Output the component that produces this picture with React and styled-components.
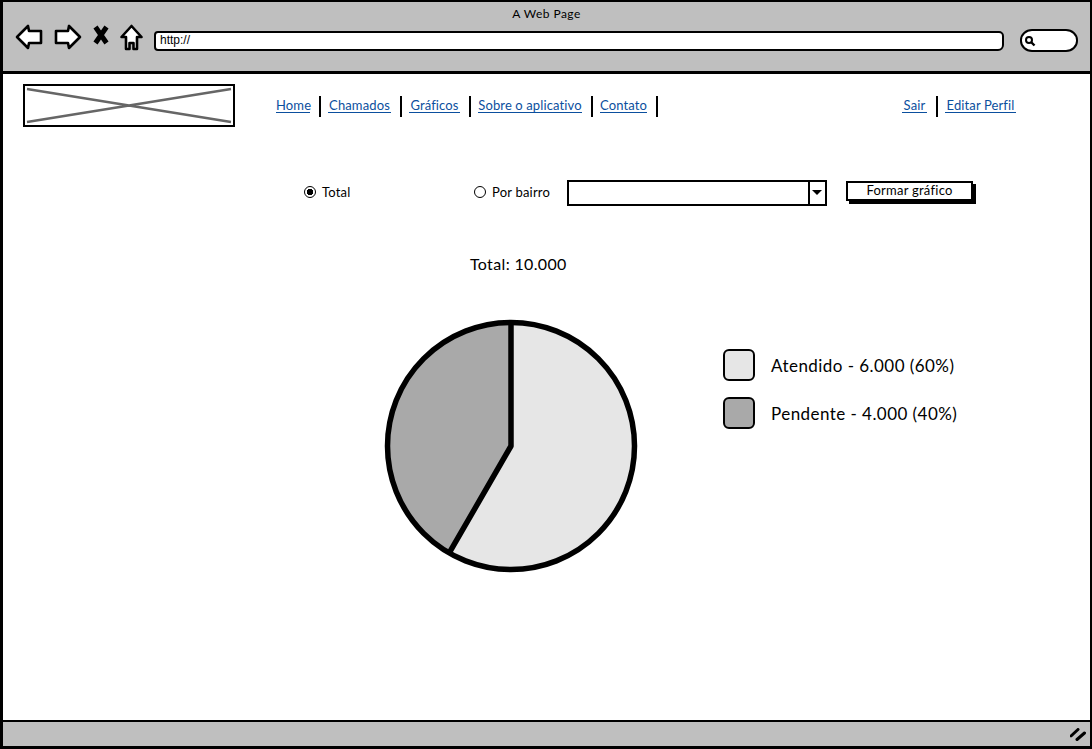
import styled, { createGlobalStyle } from "styled-components"

const topLinks = [
    { label: "Home", width: 34 },
    { label: "Chamados", width: 63 },
    { label: "Gráficos", width: 51 },
    { label: "Sobre o aplicativo", width: 104 },
    { label: "Contato", width: 47 },
]
const userLinks = [
    { label: "Sair", width: 25 },
    { label: "Editar Perfil", width: 71 },
]

const legend = [
    { label: "Atendido - 6.000 (60%)", color: "#e6e6e6" },
    { label: "Pendente - 4.000 (40%)", color: "#a9a9a9" },
]

const GlobalStyle = createGlobalStyle`
    html, body {
        margin: 0;
        padding: 0;
        background: #fff;
    }
    body {
        font-family: "Lato", "Liberation Sans", sans-serif;
        color: #000;
    }
`

const BackIcon = () => (
    <ToolIcon width="28" height="26" viewBox="0 0 28 26">
        <path d="M2 13 L13 2 L14 7 L26 7 L26 19 L14 19 L13 24 Z" fill="#fff" stroke="#000" strokeWidth="2.6" strokeLinejoin="round" />
    </ToolIcon>
)

const ForwardIcon = () => (
    <ToolIcon width="28" height="26" viewBox="0 0 28 26">
        <path d="M26 13 L15 2 L14 7 L2 7 L2 19 L14 19 L15 24 Z" fill="#fff" stroke="#000" strokeWidth="2.6" strokeLinejoin="round" />
    </ToolIcon>
)

const StopIcon = () => (
    <ToolIcon $top={1} width="16" height="20" viewBox="0 0 16 20">
        <path d="M2.5 2 L13.5 18 M13.5 2 L2.5 18" fill="none" stroke="#000" strokeWidth="5" />
    </ToolIcon>
)

const HomeIcon = () => (
    <ToolIcon width="23" height="27" viewBox="0 0 23 27">
        <path d="M11.5 2 L21.5 13 L17 13 L17 25 L13.5 25 L13.5 19 L9.5 19 L9.5 25 L6 25 L6 13 L1.5 13 Z" fill="#fff" stroke="#000" strokeWidth="2.6" strokeLinejoin="round" />
    </ToolIcon>
)

const SearchGlyph = () => (
    <svg width="12" height="12" viewBox="0 0 12 12">
        <circle cx="5" cy="5" r="3" fill="none" stroke="#000" strokeWidth="2" />
        <path d="M7.5 7.5 L10.5 10.5" stroke="#000" strokeWidth="2.4" />
    </svg>
)

const ResizeGrip = () => (
    <svg width="16" height="13" viewBox="0 0 16 13">
        <path d="M1 8 L8 1.5 M7 11.5 L14.5 5" stroke="#000" strokeWidth="3" strokeLinecap="round" />
    </svg>
)

const LogoCross = () => (
    <LogoLines viewBox="0 0 208 39" preserveAspectRatio="none">
        <path d="M2 3 L206 36 M206 3 L2 36" stroke="#666" strokeWidth="2.4" fill="none" />
    </LogoLines>
)

const PieChart = () => (
    <svg width="254" height="254" viewBox="0 0 254 254">
        <circle cx="127" cy="127" r="123.5" fill="#e6e6e6" />
        <path d="M127 127 L65.25 233.95 A123.5 123.5 0 0 1 127 3.5 Z" fill="#a9a9a9" />
        <circle cx="127" cy="127" r="123.5" fill="none" stroke="#000" strokeWidth="5.5" />
        <path d="M127 3.5 L127 127 L65.25 233.95" fill="none" stroke="#000" strokeWidth="5.5" strokeLinejoin="round" />
    </svg>
)

const App = () => {
    const renderLinks = (links) => {
        return links.map(l => (
            <NavItem key={l.label}>
                <NavLink href="#" $width={l.width}>{l.label}</NavLink>
            </NavItem>
        ))
    }

    return (
        <Window>
            <GlobalStyle />
            <TitleBar>
                <PageTitle>A Web Page</PageTitle>
                <BrowserRow>
                    <BackIcon />
                    <ForwardIcon />
                    <StopIcon />
                    <HomeIcon />
                    <UrlField>http://</UrlField>
                    <SearchField><SearchGlyph /></SearchField>
                </BrowserRow>
            </TitleBar>

            <Content>
                <Header>
                    <Logo><LogoCross /></Logo>
                    <Nav>{renderLinks(topLinks)}</Nav>
                    <UserNav>{renderLinks(userLinks)}</UserNav>
                </Header>

                <FilterRow>
                    <RadioGroup $width={170}>
                        <Radio $checked />
                        Total
                    </RadioGroup>
                    <RadioGroup $width={75}>
                        <Radio />
                        Por bairro
                    </RadioGroup>
                    <SelectBox>
                        <SelectArrow />
                    </SelectBox>
                    <SubmitButton>Formar gráfico</SubmitButton>
                </FilterRow>

                <TotalLabel>Total: 10.000</TotalLabel>

                <ChartRow>
                    <PieChart />
                    <Legend>
                        {legend.map(item => (
                            <LegendRow key={item.label}>
                                <Swatch $color={item.color} />
                                {item.label}
                            </LegendRow>
                        ))}
                    </Legend>
                </ChartRow>
            </Content>

            <StatusBar>
                <ResizeGrip />
            </StatusBar>
        </Window>
    )
}

const Window = styled.div`
    display: flex;
    flex-direction: column;
    box-sizing: border-box;
    width: 1092px;
    height: 749px;
    border: solid #000;
    border-width: 2px 2px 3px 3px;
    overflow: hidden;
`

const TitleBar = styled.div`
    display: flex;
    flex-direction: column;
    flex: none;
    box-sizing: border-box;
    height: 72px;
    padding-top: 4px;
    background: #bfbfbf;
    border-bottom: 3px solid #000;
`

const PageTitle = styled.div`
    font-size: 12px;
    line-height: 15px;
    text-align: center;
    letter-spacing: 0.45px;
`

const BrowserRow = styled.div`
    display: flex;
    align-items: flex-start;
    height: 28px;
    margin-top: 3px;
    padding-left: 12px;
`

const ToolIcon = styled.svg`
    flex: none;
    margin: ${p => p.$top || 0}px 11px 0 0;
`

const UrlField = styled.div`
    flex: none;
    box-sizing: border-box;
    width: 850px;
    height: 20px;
    margin-top: 7px;
    padding-left: 4px;
    background: #fff;
    border: 2px solid #000;
    border-radius: 4px 5px 6px 4px;
    font-family: "Liberation Sans", sans-serif;
    font-size: 12px;
    line-height: 15px;
`

const SearchField = styled.div`
    display: flex;
    align-items: center;
    flex: none;
    box-sizing: border-box;
    width: 58px;
    height: 23px;
    margin: 5px 0 0 16px;
    padding-left: 2px;
    background: #fff;
    border: 2px solid #000;
    border-radius: 12px / 11px;
`

const Content = styled.div`
    flex: 1;
    padding: 10px 0 0 20px;
    background: #fff;
`

const Header = styled.div`
    display: flex;
    align-items: flex-start;
`

const Logo = styled.div`
    flex: none;
    box-sizing: border-box;
    width: 212px;
    height: 43px;
    border: 2px solid #000;
`

const LogoLines = styled.svg`
    display: block;
    width: 100%;
    height: 100%;
`

const Nav = styled.div`
    display: flex;
    margin: 12px 0 0 32px;
`

const UserNav = styled(Nav)`
    margin: 12px 65px 0 auto;

    & > div:last-child {
        border-right: 0;
    }
`

const NavItem = styled.div`
    padding: 0 9px 0 7px;
    border-right: 2px solid #000;
    height: 21px;

    &:first-child {
        padding-left: 9px;
    }
`

const NavLink = styled.a`
    display: block;
    box-sizing: content-box;
    width: ${p => p.$width}px;
    padding-top: 2px;
    color: #0b4f9e;
    font-size: 13px;
    line-height: 14px;
    letter-spacing: 0.12px;
    text-align: center;
    text-decoration: none;
    white-space: nowrap;
    border-bottom: 1px solid #0b4f9e;
`

const FilterRow = styled.div`
    display: flex;
    align-items: center;
    height: 26px;
    margin: 53px 0 0 281px;
    font-size: 13px;
    letter-spacing: 0.2px;
`

const RadioGroup = styled.label`
    display: flex;
    align-items: center;
    flex: none;
    width: ${p => p.$width}px;
    gap: 6px;
    margin-bottom: 2px;
    white-space: nowrap;
`

const Radio = styled.span`
    flex: none;
    box-sizing: border-box;
    width: 12px;
    height: 12px;
    border: 1.5px solid #000;
    border-radius: 50%;
    background: ${p => p.$checked ? "radial-gradient(circle, #000 0 3px, #fff 3.5px)" : "#fff"};
`

const SelectBox = styled.div`
    display: flex;
    justify-content: flex-end;
    flex: none;
    box-sizing: border-box;
    width: 260px;
    height: 26px;
    margin-left: 18px;
    background: #fff;
    border: 2px solid #000;
`

const SelectArrow = styled.div`
    position: relative;
    box-sizing: border-box;
    width: 17px;
    border-left: 2px solid #000;

    &::after {
        content: "";
        position: absolute;
        left: 2px;
        top: 8px;
        border: solid transparent;
        border-width: 5px 5px 0;
        border-top-color: #000;
    }
`

const SubmitButton = styled.button`
    flex: none;
    box-sizing: border-box;
    width: 127px;
    height: 20px;
    margin: 0 0 5px 19px;
    padding: 0;
    background: #fff;
    color: #000;
    border: 2px solid #000;
    box-shadow: 3px 3px 0 #000;
    font-family: inherit;
    font-size: 13px;
    letter-spacing: 0.25px;
    line-height: 15px;
`

const TotalLabel = styled.div`
    margin: 48px 0 0 447px;
    font-size: 16px;
    line-height: 20px;
    letter-spacing: 0.35px;
`

const ChartRow = styled.div`
    display: flex;
    align-items: flex-start;
    margin: 45px 0 0 361px;
`

const Legend = styled.div`
    display: flex;
    flex-direction: column;
    gap: 16px;
    margin: 30px 0 0 85px;
`

const LegendRow = styled.div`
    display: flex;
    align-items: center;
    gap: 16px;
    font-size: 17px;
    letter-spacing: 0.45px;
    white-space: nowrap;
`

const Swatch = styled.span`
    flex: none;
    box-sizing: border-box;
    width: 32px;
    height: 32px;
    background: ${p => p.$color};
    border: 2px solid #000;
    border-radius: 6px;
`

const StatusBar = styled.div`
    display: flex;
    align-items: center;
    justify-content: flex-end;
    flex: none;
    box-sizing: border-box;
    height: 26px;
    padding-right: 4px;
    background: #bfbfbf;
    border-top: 2px solid #000;
`

export default App
